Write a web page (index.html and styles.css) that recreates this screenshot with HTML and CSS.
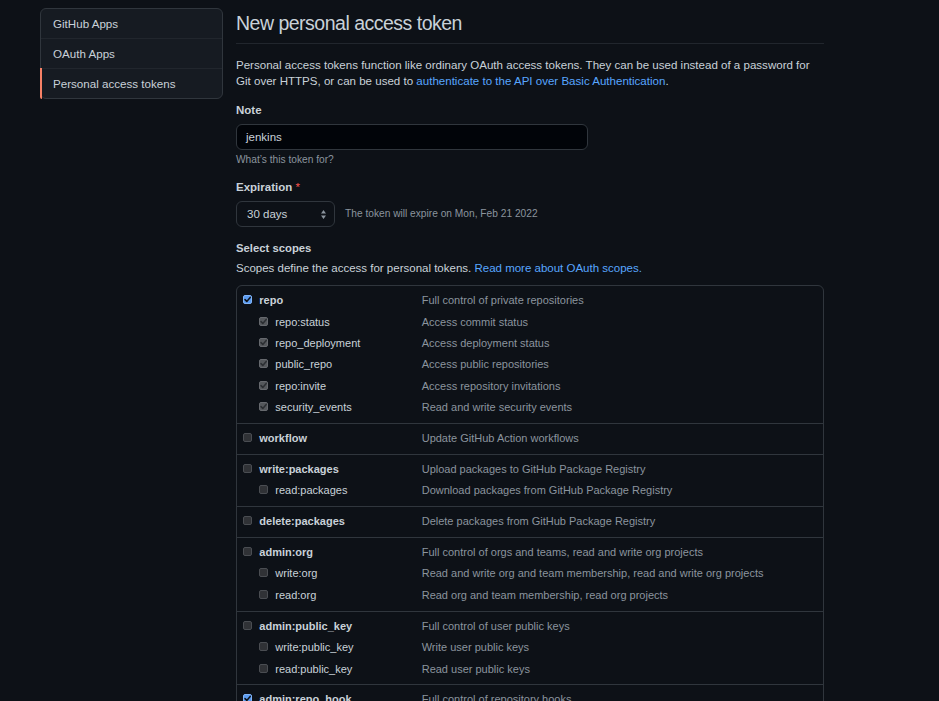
FILE: index.html
```html
<!DOCTYPE html>
<html lang="en">
<head>
<meta charset="utf-8">
<title>New personal access token</title>
<link rel="stylesheet" href="styles.css">
</head>
<body>
<div class="layout">
  <nav class="menu">
    <a class="menu-item">GitHub Apps</a>
    <a class="menu-item">OAuth Apps</a>
    <a class="menu-item selected">Personal access tokens</a>
  </nav>
  <main class="main">
    <div class="subhead"><h2 class="subhead-title">New personal access token</h2></div>
    <p class="intro">Personal access tokens function like ordinary OAuth access tokens. They can be used instead of a password for Git over HTTPS, or can be used to <a class="link">authenticate to the API over Basic Authentication</a>.</p>

    <div class="label">Note</div>
    <div class="input">jenkins</div>
    <div class="note">What’s this token for?</div>

    <div class="label label-exp">Expiration <span class="req">*</span></div>
    <div class="select-row">
      <div class="select"><span>30 days</span>
        <svg class="select-arrows" width="5" height="9" viewBox="0 0 5 9"><path d="M2.5 0 L5 3.4 L0 3.4Z M0 5.6 L5 5.6 L2.5 9Z" fill="#8b949e"/></svg>
      </div>
      <span class="note-inline">The token will expire on Mon, Feb 21 2022</span>
    </div>

    <div class="label label-scopes">Select scopes</div>
    <p class="scopes-desc">Scopes define the access for personal tokens. <a class="link">Read more about OAuth scopes.</a></p>

    <div class="scopes">
      <div class="group">
        <div class="row"><div class="name top"><span class="cb checked"><svg viewBox="0 0 9 9"><path d="M2 4.6 L3.8 6.4 L7.2 2.4"/></svg></span><b>repo</b></div><div class="desc">Full control of private repositories</div></div>
        <div class="row"><div class="name child"><span class="cb implied"><svg viewBox="0 0 9 9"><path d="M2 4.6 L3.8 6.4 L7.2 2.4"/></svg></span>repo:status</div><div class="desc">Access commit status</div></div>
        <div class="row"><div class="name child"><span class="cb implied"><svg viewBox="0 0 9 9"><path d="M2 4.6 L3.8 6.4 L7.2 2.4"/></svg></span>repo_deployment</div><div class="desc">Access deployment status</div></div>
        <div class="row"><div class="name child"><span class="cb implied"><svg viewBox="0 0 9 9"><path d="M2 4.6 L3.8 6.4 L7.2 2.4"/></svg></span>public_repo</div><div class="desc">Access public repositories</div></div>
        <div class="row"><div class="name child"><span class="cb implied"><svg viewBox="0 0 9 9"><path d="M2 4.6 L3.8 6.4 L7.2 2.4"/></svg></span>repo:invite</div><div class="desc">Access repository invitations</div></div>
        <div class="row"><div class="name child"><span class="cb implied"><svg viewBox="0 0 9 9"><path d="M2 4.6 L3.8 6.4 L7.2 2.4"/></svg></span>security_events</div><div class="desc">Read and write security events</div></div>
      </div>
      <div class="group">
        <div class="row"><div class="name top"><span class="cb"></span><b>workflow</b></div><div class="desc">Update GitHub Action workflows</div></div>
      </div>
      <div class="group">
        <div class="row"><div class="name top"><span class="cb"></span><b>write:packages</b></div><div class="desc">Upload packages to GitHub Package Registry</div></div>
        <div class="row"><div class="name child"><span class="cb"></span>read:packages</div><div class="desc">Download packages from GitHub Package Registry</div></div>
      </div>
      <div class="group">
        <div class="row"><div class="name top"><span class="cb"></span><b>delete:packages</b></div><div class="desc">Delete packages from GitHub Package Registry</div></div>
      </div>
      <div class="group">
        <div class="row"><div class="name top"><span class="cb"></span><b>admin:org</b></div><div class="desc">Full control of orgs and teams, read and write org projects</div></div>
        <div class="row"><div class="name child"><span class="cb"></span>write:org</div><div class="desc">Read and write org and team membership, read and write org projects</div></div>
        <div class="row"><div class="name child"><span class="cb"></span>read:org</div><div class="desc">Read org and team membership, read org projects</div></div>
      </div>
      <div class="group">
        <div class="row"><div class="name top"><span class="cb"></span><b>admin:public_key</b></div><div class="desc">Full control of user public keys</div></div>
        <div class="row"><div class="name child"><span class="cb"></span>write:public_key</div><div class="desc">Write user public keys</div></div>
        <div class="row"><div class="name child"><span class="cb"></span>read:public_key</div><div class="desc">Read user public keys</div></div>
      </div>
      <div class="group">
        <div class="row"><div class="name top"><span class="cb checked"><svg viewBox="0 0 9 9"><path d="M2 4.6 L3.8 6.4 L7.2 2.4"/></svg></span><b>admin:repo_hook</b></div><div class="desc">Full control of repository hooks</div></div>
        <div class="row"><div class="name child"><span class="cb implied"><svg viewBox="0 0 9 9"><path d="M2 4.6 L3.8 6.4 L7.2 2.4"/></svg></span>write:repo_hook</div><div class="desc">Write repository hooks</div></div>
        <div class="row"><div class="name child"><span class="cb implied"><svg viewBox="0 0 9 9"><path d="M2 4.6 L3.8 6.4 L7.2 2.4"/></svg></span>read:repo_hook</div><div class="desc">Read repository hooks</div></div>
      </div>
    </div>
  </main>
</div>
</body>
</html>
```
FILE: styles.css
```css
html, body {
  margin: 0;
  padding: 0;
  background: #0d1117;
  color: #c9d1d9;
  font-family: "Liberation Sans", Arial, sans-serif;
}

.layout {
  display: flex;
  align-items: flex-start;
  gap: 13px;
  padding: 8px 0 0 40px;
}

/* sidebar menu */
.menu {
  width: 183px;
  box-sizing: border-box;
  display: flex;
  flex-direction: column;
  background: #161b22;
  border: 1px solid #30363d;
  border-radius: 6px;
  flex-shrink: 0;
}
.menu-item {
  position: relative;
  display: flex;
  align-items: center;
  height: 29px;
  padding: 0 12px;
  font-size: 11.6px;
  color: #c9d1d9;
}
.menu-item + .menu-item {
  border-top: 1px solid #21262d;
}
.menu-item.selected::before {
  content: "";
  position: absolute;
  left: -1px;
  top: -1px;
  bottom: -1px;
  width: 2px;
  background: #f78166;
  border-bottom-left-radius: 6px;
}

/* main column */
.main {
  width: 588px;
  flex-shrink: 0;
}
.subhead {
  padding: 3px 0 8px;
  border-bottom: 1px solid #21262d;
}
.subhead-title {
  margin: 0;
  font-size: 19.5px;
  line-height: 24px;
  font-weight: 400;
  letter-spacing: -0.5px;
  color: #c9d1d9;
}
.intro {
  margin: 12.7px 0 0;
  font-size: 11.55px;
  line-height: 16px;
}
.link {
  color: #58a6ff;
  text-decoration: none;
}
.label {
  margin-top: 13px;
  font-size: 11.5px;
  line-height: 16px;
  font-weight: 700;
}
.label-exp {
  margin-top: 12px;
}
.label-scopes {
  margin-top: 13px;
  font-size: 11.3px;
}
.req {
  color: #f85149;
  font-weight: 400;
}
.input {
  margin-top: 6px;
  width: 352px;
  height: 26px;
  box-sizing: border-box;
  display: flex;
  align-items: center;
  padding: 0 9px;
  background: #010409;
  border: 1px solid #30363d;
  border-radius: 6px;
  font-size: 11.5px;
  color: #c9d1d9;
}
.note {
  margin-top: 3px;
  font-size: 10.2px;
  line-height: 14px;
  color: #8b949e;
}
.select-row {
  margin-top: 6px;
  display: flex;
  align-items: center;
  gap: 10px;
}
.select {
  width: 99px;
  height: 26px;
  box-sizing: border-box;
  display: flex;
  align-items: center;
  justify-content: space-between;
  padding: 0 8px 0 10px;
  background: #0d1117;
  border: 1px solid #30363d;
  border-radius: 6px;
  font-size: 11.5px;
  color: #c9d1d9;
}
.select-arrows {
  display: block;
  margin-top: 1px;
}
.note-inline {
  font-size: 10.2px;
  line-height: 14px;
  color: #8b949e;
}
.scopes-desc {
  margin: 4.5px 0 0;
  font-size: 11.5px;
  line-height: 16px;
}

/* scopes table */
.scopes {
  margin-top: 9px;
  border: 1px solid #30363d;
  border-radius: 6px;
}
.group {
  padding: 4px 0 4.5px;
}
.group + .group {
  border-top: 1px solid #30363d;
}
.row {
  display: flex;
  height: 21.4px;
  line-height: 21.4px;
  font-size: 11px;
}
.name {
  width: 184.7px;
  box-sizing: border-box;
  flex-shrink: 0;
  display: flex;
  align-items: flex-start;
  color: #c9d1d9;
}
.name.top {
  padding-left: 6.3px;
}
.name.child {
  padding-left: 22.3px;
}
.name b {
  font-weight: 700;
}
.desc {
  color: #8b949e;
}
.cb {
  width: 9px;
  height: 9px;
  box-sizing: border-box;
  margin: 5px 7px 0 0;
  border-radius: 2px;
  background: #303236;
  border: 1px solid #4a4d52;
  flex-shrink: 0;
  display: block;
}
.cb svg {
  display: block;
  width: 9px;
  height: 9px;
  margin: -1px 0 0 -1px;
  fill: none;
  stroke-width: 1.5;
  stroke-linecap: round;
  stroke-linejoin: round;
}
.cb.checked {
  background: #5b9bf0;
  border-color: #7fb3f7;
}
.cb.checked svg {
  stroke: #0d1117;
}
.cb.implied {
  background: #55585c;
  border-color: #66696e;
}
.cb.implied svg {
  stroke: #2b2e32;
}
```
